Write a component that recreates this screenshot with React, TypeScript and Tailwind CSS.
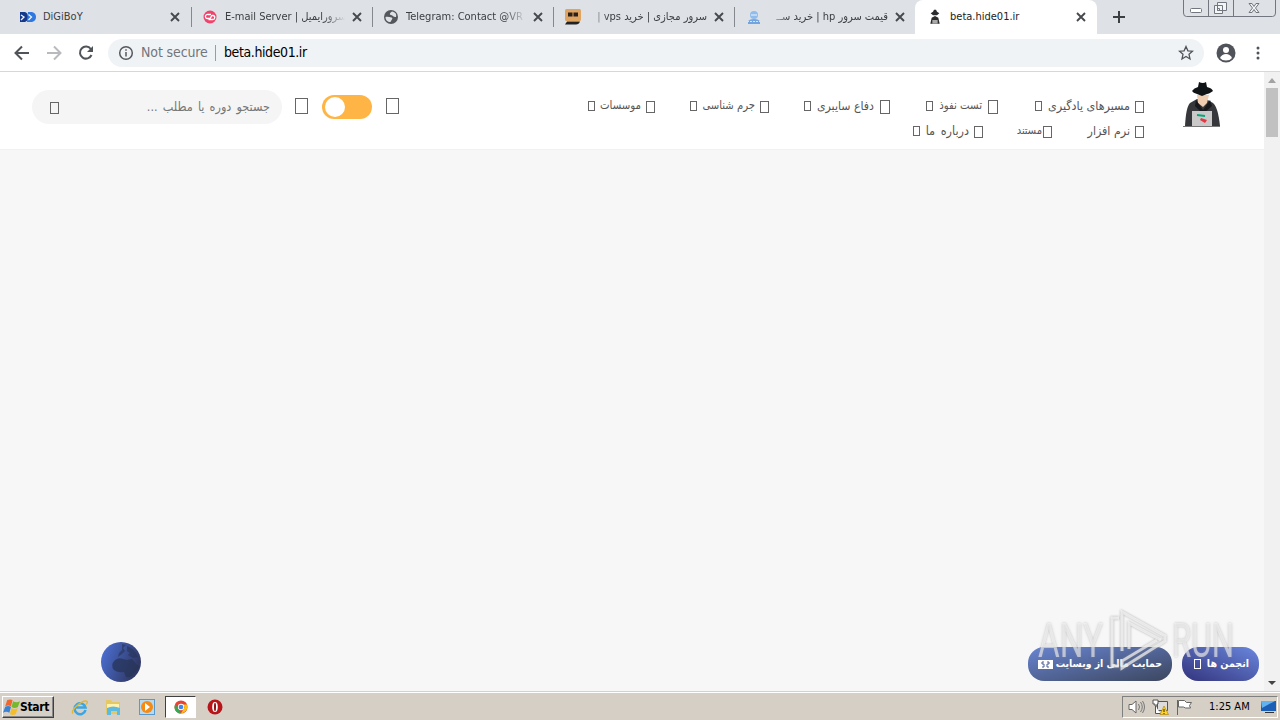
import React from "react";

const Close = () => (
  <svg viewBox="0 0 10 10" className="h-2.5 w-2.5 shrink-0" stroke="#46494d" strokeWidth="1.9">
    <path d="M1 1l8 8M9 1l-8 8" />
  </svg>
);

const DigiIcon = () => (
  <svg viewBox="0 0 16 16" className="h-4 w-4">
    <path d="M0 3h5q3 1 3 5t-3 5H0z" fill="#16388a" />
    <path d="M8 3h4q4 1 4 5t-4 5H7z" fill="#2f78df" />
    <path d="M1 6l3 2-3 3M8.500 5.500l3 2.500-3 3" stroke="#eef4ff" strokeWidth="1.300" fill="none" />
  </svg>
);

const MailIcon = () => (
  <svg viewBox="0 0 16 16" className="h-4 w-4">
    <circle cx="8" cy="8" r="6.500" fill="#f0426b" />
    <path d="M9 5.500H6a2 2 0 0 0-1 4h3l2-3h1a2 2 0 0 1-.5 4H6.500" stroke="#fff" strokeWidth="1.300" fill="none" />
  </svg>
);

const WorldIcon = () => (
  <svg viewBox="0 0 16 16" className="h-4 w-4">
    <circle cx="8" cy="8" r="7" fill="#54585d" />
    <path d="M2.500 8c2-.5 4 0 6 .5s0 2.500-1 4.500c-3 0-5-2-5-5zM9 2.500c-2 1-3 3-1 3.500s2 2 5 2c1-3-1-5-4-5.500z" fill="#dee1e6" />
  </svg>
);

const BotIcon = () => (
  <svg viewBox="0 0 16 16" className="ml-px h-4 w-4">
    <rect width="16" height="12" rx="1.500" fill="#dfa362" />
    <path d="M3 3.500h4.500v4H3zM8.500 3.500H13v4H8.500z" fill="#2a211d" />
    <path d="M2 12.500h13q-1 3-4 3H0z" fill="#222" />
  </svg>
);

const AdminIcon = () => (
  <svg viewBox="0 0 16 16" className="ml-px h-4 w-4">
    <circle cx="8" cy="6" r="4" fill="#8fbcec" />
    <path d="M5 6h6" stroke="#eef5fd" />
    <path d="M2 15v-3q2-2 6-2t6 2v3z" fill="#72a5df" />
    <path d="M1 12.500h14" stroke="#d6e6f8" strokeDasharray="2 1" />
  </svg>
);

const HackerIcon = () => (
  <svg viewBox="0 0 40 48" className="h-4 w-4">
    <path d="M14 8l3-6h6l3 6 7 5-7 6H14l-7-6zM6 44l4-18 10-5 10 5 4 18z" fill="#292b2d" />
    <path d="M12 33h16v11H12z" fill="#aaa" />
  </svg>
);

const tabs = [
  { icon: <DigiIcon />, title: "DiGiBoY", rtl: false, fade: false },
  { icon: <MailIcon />, title: "E-mail Server | سرورایمیل", rtl: false, fade: true },
  { icon: <WorldIcon />, title: "Telegram: Contact @VR", rtl: false, fade: true },
  { icon: <BotIcon />, title: "سرور مجازی | خرید vps |", rtl: true, fade: true },
  { icon: <AdminIcon />, title: "قیمت سرور hp | خرید ســ", rtl: true, fade: true },
];

function TabStrip() {
  return (
    <div className="flex h-[34px] bg-[#dee1e6] pl-[11px] text-[11px] text-[#3c4043]">
      {tabs.map((tab, idx) => (
        <div key={idx} className={`flex w-[181px] shrink-0 items-center ${idx === 0 ? "pl-[9px]" : "pl-2.5"}`}>
          <div className="w-[23px] shrink-0">{tab.icon}</div>
          <div
            dir={tab.rtl ? "rtl" : "ltr"}
            className={
              tab.fade
                ? tab.rtl
                  ? "w-[120px] overflow-hidden whitespace-nowrap [mask-image:linear-gradient(to_left,#000_82%,transparent)]"
                  : "w-[120px] overflow-hidden whitespace-nowrap [mask-image:linear-gradient(to_right,#000_82%,transparent)]"
                : "w-[120px] overflow-hidden whitespace-nowrap"
            }
          >
            {tab.title}
          </div>
          <div className="ml-[7px]"><Close /></div>
          {idx < 4 && <div className="ml-auto h-5 w-px bg-[#85898f]" />}
        </div>
      ))}
      <div className="-ml-px flex w-[182px] items-center rounded-t-lg bg-white pl-3">
        <div className="w-[23px]"><HackerIcon /></div>
        <div className="w-[126px] text-[#222]">beta.hide01.ir</div>
        <Close />
      </div>
      <svg viewBox="0 0 12 12" className="ml-4 mt-[11px] h-3 w-3" stroke="#3c4043" strokeWidth="2">
        <path d="M6 0v12M0 6h12" />
      </svg>
      <div className="ml-auto mr-1 h-[17px] w-[93px]">
        <svg viewBox="0 0 93 17" className="h-full w-full" fill="none" stroke="#72777f">
          <path d="M.5 0v13q0 3.500 3 3.500h86q3 0 3-3.500V0M25.500 0v16M50.500 0v16" />
          <rect x="7.500" y="8.500" width="11" height="4" rx="1" fill="#fff" />
          <path d="M34.500 2.500h9v8h-9zM31.500 5.500h8v8h-8zM34.500 8.500h2v2h-2z" fill="#f4f5f7" />
          <path d="M66 3.500h3l2 3 2-3h3l-3.500 4.500 3.500 4.500h-3l-2-3-2 3h-3l3.500-4.500z" fill="#f4f5f7" />
        </svg>
      </div>
    </div>
  );
}

function AddressBar() {
  return (
    <div className="flex h-[38px] items-center border-b border-[#d5d7da] bg-white">
      <svg viewBox="0 0 108 36" className="h-9 w-[108px] shrink-0" fill="none" stroke="#505358" strokeWidth="2">
        <path d="M29 18H16M22 11.500L15.500 18l6.500 6.500" />
        <path d="M47 18h13M54 11.500l6.500 6.500-6.500 6.500" stroke="#b8babd" />
        <path d="M90.800 14A6 6 0 1 0 91.500 20" />
        <path d="M93 11v6h-6z" fill="#505358" stroke="none" />
      </svg>
      <div className="flex h-7 w-[1096px] items-center rounded-full bg-[#f0f3f6] pl-2.5 pr-2.5 text-[14px]">
        <svg viewBox="0 0 16 16" className="h-4 w-4" fill="none" stroke="#55585d" strokeWidth="1.500">
          <circle cx="8" cy="8" r="6.300" /><path d="M8 7v4.500M8 4.200v1.500" />
        </svg>
        <span className="ml-[7px] w-[67px] whitespace-nowrap tracking-[-0.12px] text-[#72767b]">Not secure</span>
        <div className="ml-[7px] mr-2 h-4 w-px bg-[#999da2]" />
        <span className="whitespace-nowrap tracking-[-0.4px] text-black">beta.hide01.ir</span>
        <svg viewBox="0 0 16 16" className="ml-auto h-4 w-4" fill="none" stroke="#50545a" strokeWidth="1.300">
          <path d="M8 1.500l1.900 4.300 4.600.4L11 9.300l1 4.700-4-2.500L4 14l1-4.700-3.500-3.100 4.600-.4z" />
        </svg>
      </div>
      <svg viewBox="0 0 20 20" className="ml-3 h-5 w-5">
        <circle cx="10" cy="10" r="9.500" fill="#50545a" />
        <circle cx="10" cy="7" r="3" fill="#fff" />
        <path d="M4 15q2-4 6-4t6 4q-2 2.500-6 2.500T4 15z" fill="#fff" />
      </svg>
      <svg viewBox="0 0 4 14" className="ml-5 h-3.5 w-1" fill="#50545a">
        <circle cx="2" cy="2" r="1.500" /><circle cx="2" cy="7" r="1.500" /><circle cx="2" cy="12" r="1.500" />
      </svg>
    </div>
  );
}

type NavItemProps = {
  label: string;
  className: string;
  caret?: boolean;
  large?: boolean;
  tight?: boolean;
};

function NavItem({ label, className, caret = true, large = false, tight = false }: NavItemProps) {
  return (
    <div className={`flex h-[25px] shrink-0 items-center justify-end ${className}`}>
      {caret && <i className="mr-auto h-2.5 w-[7px] border border-[#666]" />}
      <span dir="rtl" className="whitespace-nowrap leading-4">{label}</span>
      <i
        className={`mt-[3px] shrink-0 border border-[#666] ${large ? "ml-1.5 h-3.5 w-2.5" : tight ? "ml-px h-3 w-[9px]" : "ml-[5px] h-3 w-[9px]"}`}
      />
    </div>
  );
}

function Header() {
  return (
    <header className="flex h-[78px] border-b border-[#f1f1f1] bg-white text-[#555]">
      <div className="ml-8 mt-[18px] flex h-[34px] w-[250px] items-center justify-between rounded-full bg-[#f5f5f5] pl-[18px] pr-3">
        <i className="mt-0.5 h-3 w-[9px] border border-[#666]" />
        <span dir="rtl" className="text-[12.5px] text-[#777] [word-spacing:1.6px]">جستجو دوره یا مطلب ...</span>
      </div>
      <i className="ml-[13px] mt-[26px] h-4 w-[13px] border border-[#666]" />
      <div className="ml-3.5 mt-[23px] h-6 w-[50px] rounded-full bg-[#ffb545] p-0.5 pl-[3px]">
        <div className="h-5 w-5 rounded-full bg-white" />
      </div>
      <i className="ml-3.5 mt-[26px] h-4 w-[13px] border border-[#666]" />
      <nav className="ml-[189px] mt-[21px] w-[556px] shrink-0">
        <div className="flex">
          <NavItem label="موسسات" className="w-[67px] text-[11.3px]" />
          <NavItem label="جرم شناسی" className="ml-[35px] w-[79px] text-[11.2px]" />
          <NavItem label="دفاع سایبری" className="ml-[35px] w-[86px] text-[12.2px]" large />
          <NavItem label="تست نفوذ" className="ml-9 w-[72px] text-[11.3px]" large />
          <NavItem label="مسیرهای یادگیری" className="ml-[37px] w-[109px] text-[12.4px]" />
        </div>
        <div className="flex justify-end">
          <NavItem label="درباره ما" className="w-[70px] text-[12.5px] [word-spacing:2px]" />
          <NavItem label="مستند" className="ml-[34px] w-[35px] text-[11px]" caret={false} tight />
          <NavItem label="نرم افزار" className="ml-[35px] w-[57px] text-[12.3px]" caret={false} />
        </div>
      </nav>
      <svg viewBox="0 0 40 48" className="ml-[39px] mt-[9px] h-12 w-10">
        <path d="M2 45q1-19 5-23l7-4h9l7 4q5 4 7 23z" fill="#35373a" />
        <path d="M14 14h12l-2 8-4 4-5-4z" fill="#efcdb3" />
        <path d="M13 19l7 10 7-10 2 6-9 8-8-8z" fill="#17191c" />
        <path d="M15 6l1-5q4 2 7 0l1 5q5 1 6 4-4 3-6 3l-5 2-5-2q-4-1-5-3 2-3 6-4z" fill="#111417" />
        <path d="M9 30h20v15H9z" fill="#c9c9ca" />
        <path d="M14 34l8 1" stroke="#00a978" strokeWidth="2" />
        <path d="M18 37l6 2-2 3-5-3" fill="#e53642" />
        <path d="M0 45.500h37" stroke="#777" />
      </svg>
    </header>
  );
}

function Watermark() {
  return (
    <div className="pointer-events-none absolute bottom-[18px] right-[30px] flex h-[66px] w-[196px] items-center justify-between font-['Roboto',sans-serif] text-[49px] font-normal leading-none text-white/55 [text-shadow:0_0_3px_#8888]">
      <span className="w-[64px] origin-left scale-x-[.68]">ANY</span>
      <svg
        viewBox="0 0 60 64"
        className="absolute left-[70px] top-0 h-16 w-[60px] drop-shadow-[0_0_1px_#888]"
        fill="none"
        stroke="#fff"
        strokeOpacity=".65"
        strokeWidth="3"
      >
        <path d="M11 11H4v48h7" />
        <path d="M14 44V5l43 24v5L14 61v-7l35-21" />
        <path d="M21 42V16l32 17" />
      </svg>
      <span className="w-[62px] origin-left scale-x-[.64]">RUN</span>
    </div>
  );
}

function Page() {
  return (
    <div className="flex h-[619px] bg-[#f7f7f7]">
      <main className="relative w-[1264px]">
        <Header />
        <svg viewBox="0 0 40 40" className="absolute bottom-[9px] left-[101px] h-10 w-10">
          <defs>
            <linearGradient id="earth" x2="1" y2=".4">
              <stop stopColor="#4d73dc" />
              <stop offset="1" stopColor="#303965" />
            </linearGradient>
          </defs>
          <circle cx="20" cy="20" r="20" fill="url(#earth)" />
          <path d="M14 18q4-3 8-1l4 1 5-1 4 5 3 2q0 4-3 5l-4 5q-3 2-6 1l-2-5q-6 1-10-2-4-5 1-10z" fill="#273458" opacity=".75" />
          <path d="M21 2l4 1-3 3 2 3-3 3-4 3 1-4 3-3zM26 4q8 3 11 11l-5 1-5-3 2-2-3-2z" fill="#273458" opacity=".6" />
        </svg>
        <div className="absolute bottom-2.5 right-[5px] flex gap-2.5 text-white">
          <div className="flex h-[34px] w-36 items-center justify-between rounded-[16px] bg-linear-to-br from-[#6885d4] to-[#3c465e] px-2.5 text-[10.4px] font-bold">
            <svg viewBox="0 0 15 9" className="h-[9px] w-[15px] shrink-0">
              <path d="M0 0h15v9H0z" fill="#fff" />
              <path d="M6 2H4v2h2v3H4M9 2h2v2H9v3h2" stroke="#4c5f94" fill="none" />
            </svg>
            <span dir="rtl" className="whitespace-nowrap">حمایت مالی از وبسایت</span>
          </div>
          <div className="flex h-[34px] w-[77px] items-center justify-between rounded-[16px] bg-linear-to-tr from-[#34347c] to-[#6a88df] pl-3 pr-2.5 text-[10.6px] font-bold">
            <i className="h-2.5 w-[7px] border border-white" />
            <span dir="rtl" className="whitespace-nowrap">انجمن ها</span>
          </div>
        </div>
        <Watermark />
      </main>
      <div className="flex w-4 flex-col items-center bg-[#f1f1f1]">
        <svg viewBox="0 0 16 16" className="h-4 w-4"><path d="M4 11l4-5 4 5z" fill="#a3a3a3" /></svg>
        <div className="h-[49px] w-3 bg-[#c1c1c1]" />
        <svg viewBox="0 0 16 16" className="mt-auto h-4 w-4"><path d="M4 6h8l-4 4z" fill="#444" /></svg>
      </div>
    </div>
  );
}

function Taskbar() {
  return (
    <div className="flex h-[29px] items-center border-t border-[#d6d0c8] bg-[#d5cfc6] pl-0.5 pt-0.5 text-[11px] text-black shadow-[inset_0_1px_#fff]">
      <div className="flex h-[22px] w-[52px] items-center border border-b-[#404040] border-l-white border-r-[#404040] border-t-white font-bold shadow-[inset_-1px_-1px_#888]">
        <svg viewBox="0 0 16 16" className="h-[17px] w-[17px] shrink-0">
          <path d="M4 1q3-1 5 0L7.500 7Q5 5 2 7z" fill="#ef672c" />
          <path d="M9.500 2q3 2 6.500 0l-2 5.500q-3 2-6 0z" fill="#75b72e" />
          <path d="M2 7.500q3-2 5.500 0L6 13q-3-2-6 0z" fill="#3983d5" />
          <path d="M8 8.500q3 2 6 0L12 14q-3 2-5.500 0z" fill="#f6bd2b" />
        </svg>
        <span className="text-[12px] tracking-[-0.3px]">Start</span>
      </div>
      <svg viewBox="0 0 18 18" className="ml-[17px] h-[18px] w-[18px]" fill="none">
        <path d="M14.500 12A5.500 5.500 0 1 1 14.500 9.500H5" stroke="#3ba6e3" strokeWidth="2.500" />
        <path d="M2 15.500q-2-2 3-7 8-7 11-5 1 1-1 3" stroke="#e6b62c" strokeWidth="1.400" />
      </svg>
      <svg viewBox="0 0 18 18" className="ml-[15px] h-[18px] w-[18px]">
        <path d="M2 2h5l1 2h8v12H2z" fill="#e5c866" />
        <path d="M3 6h12v4H3z" fill="#fff2b1" />
        <path d="M3 10q6-3 13 0v7h-3v-4H7v4H3z" fill="#5bbbe0" />
      </svg>
      <svg viewBox="0 0 16 16" className="ml-[17px] h-4 w-4">
        <rect x=".5" y=".5" width="15" height="15" fill="#b9d9ee" stroke="#579acb" />
        <circle cx="8" cy="8" r="6" fill="#f68a12" />
        <path d="M6 4l5 4-5 4z" fill="#fff" />
      </svg>
      <div className="ml-2.5 flex h-[22px] w-[31px] items-center justify-center border border-b-white border-l-[#404040] border-r-white border-t-[#404040] bg-white">
        <svg viewBox="0 0 16 16" className="h-3.5 w-3.5">
          <circle cx="8" cy="8" r="7.500" fill="#e84335" />
          <path d="M1.500 4.500L8 15.500A7.500 7.500 0 0 1 1.500 4.500z" fill="#35a853" />
          <path d="M8 5h7q2 8-7 10.500l4-7.500z" fill="#fbc116" />
          <circle cx="8" cy="8" r="3.600" fill="#fff" />
          <circle cx="8" cy="8" r="2.700" fill="#4386ef" />
        </svg>
      </div>
      <svg viewBox="0 0 16 16" className="ml-[11px] h-4 w-4">
        <circle cx="8" cy="8" r="7.500" fill="#b71519" />
        <ellipse cx="8" cy="8" rx="2.800" ry="5" fill="#fff" />
        <ellipse cx="8" cy="8" rx="1" ry="4.200" fill="#8b1014" />
      </svg>
      <div className="ml-auto mr-0.5 flex h-[22px] w-[156px] items-center border border-b-white border-l-[#808080] border-r-white border-t-[#808080] pl-[5px]">
        <svg viewBox="0 0 18 18" className="h-[18px] w-[18px]" fill="none" stroke="#777">
          <path d="M1 6.500h3L8 3v12l-4-3.500H1z" fill="#fff" stroke="#666" />
          <path d="M10.500 6q2 3 0 6M12.500 4q3.500 5 0 10M14.500 3q4 6 0 12" />
        </svg>
        <svg viewBox="0 0 18 18" className="ml-1.5 h-[18px] w-[18px]">
          <path d="M5.500 3.500h10v9h-10z" fill="#ddd" stroke="#555" />
          <path d="M1 2h5v4H5v2H3V6H1zM3.500 8v7.500h5" fill="#fff" stroke="#555" />
          <path d="M8 16.500L12 8l4.500 8.500z" fill="#ffd42a" stroke="#a87a00" strokeWidth=".6" />
          <path d="M12 11v3M12 15v1" stroke="#222" />
        </svg>
        <svg viewBox="0 0 18 18" className="ml-[5px] h-[18px] w-[18px]">
          <path d="M2.500 2v15M3.500 2.500h6l2 2h5l-2 3 1 2.500h-5l-2-1h-5z" fill="#fff" stroke="#666" />
        </svg>
        <span className="ml-[16px] whitespace-nowrap">1:25 AM</span>
        <svg viewBox="0 0 16 16" className="ml-auto h-4 w-4">
          <path d="M0 2h15v10H0z" fill="#1b5eb6" />
          <path d="M0 2h14L1 9z" fill="#62b2f0" />
          <path d="M4 13.500h9" stroke="#333" />
        </svg>
      </div>
    </div>
  );
}

export default function App() {
  return (
    <div className="h-[720px] w-[1280px] overflow-hidden font-['DejaVu_Sans_Condensed','DejaVu_Sans',sans-serif]">
      <TabStrip />
      <AddressBar />
      <Page />
      <Taskbar />
    </div>
  );
}
